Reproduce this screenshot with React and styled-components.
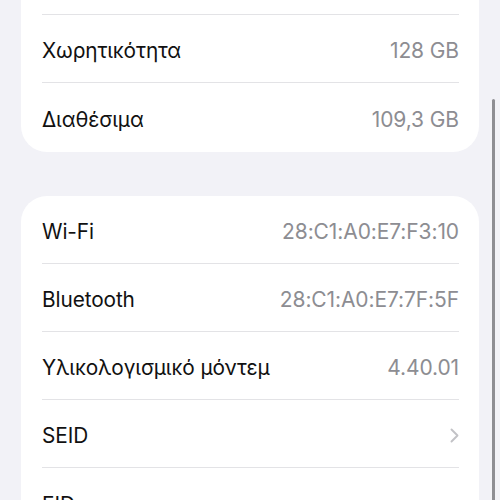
import styled, { createGlobalStyle } from "styled-components"

const GlobalStyle = createGlobalStyle`
html, body {
    margin: 0;
    padding: 0;
    background: #f2f2f7;
}
* {
    box-sizing: border-box;
}
`

// linhas da tela de info (a primeira fica escondida acima da tela)
const grupos = [
    [
        { label: "", value: "" },
        { label: "Χωρητικότητα", value: "128 GB" },
        { label: "Διαθέσιμα", value: "109,3 GB" },
    ],
    [
        { label: "Wi-Fi", value: "28:C1:A0:E7:F3:10" },
        { label: "Bluetooth", value: "28:C1:A0:E7:7F:5F" },
        { label: "Υλικολογισμικό μόντεμ", value: "4.40.01" },
        { label: "SEID", chevron: true },
        { label: "EID", value: "" },
    ],
]

export default function App(){
    return (
        <>
            <GlobalStyle />
            <Screen>
                <Lista>
                    {grupos.map((grupo, g) => (
                        <Card key={g}>
                            {grupo.map((item, i) => (
                                <Row key={i}>
                                    <RowInner last={i === grupo.length - 1}>
                                        <Label>{item.label}</Label>
                                        {item.chevron ?
                                            <svg width="9" height="15" viewBox="0 0 9 15">
                                                <path d="M1.5 1.5 L7.5 7.5 L1.5 13.5" fill="none" stroke="#c2c2c6" strokeWidth="1.9" strokeLinecap="round" strokeLinejoin="round" />
                                            </svg> :
                                            <Value>{item.value}</Value>}
                                    </RowInner>
                                </Row>
                            ))}
                        </Card>
                    ))}
                </Lista>
                <Scrollbar />
            </Screen>
        </>
    )
}

const Screen = styled.div`
position: relative;
width: 500px;
height: 500px;
overflow: hidden;
background: #f2f2f7;
font-family: Inter, 'Noto Sans', sans-serif;
`

const Lista = styled.div`
display: flex;
flex-direction: column;
gap: 44px;
padding: 0 21px;
margin-top: -53px;
`

const Card = styled.div`
background: #ffffff;
border-radius: 26px;
overflow: hidden;
`

const Row = styled.div`
padding: 0 20px 0 21px;
`

const RowInner = styled.div`
height: ${props => props.last ? "69px" : "68px"};
padding-top: 4px;
display: flex;
align-items: center;
justify-content: space-between;
border-bottom: ${props => props.last ? "none" : "1px solid #e3e3e6"};
`

const Label = styled.span`
font-size: 20.8px;
color: #111111;
letter-spacing: -0.1px;
`

const Value = styled.span`
font-size: 21px;
color: #8d8d92;
letter-spacing: -0.1px;
`

const Scrollbar = styled.div`
position: absolute;
right: 5px;
top: 99px;
width: 3px;
height: 420px;
border-radius: 2px;
background: #8e8e93;
`
